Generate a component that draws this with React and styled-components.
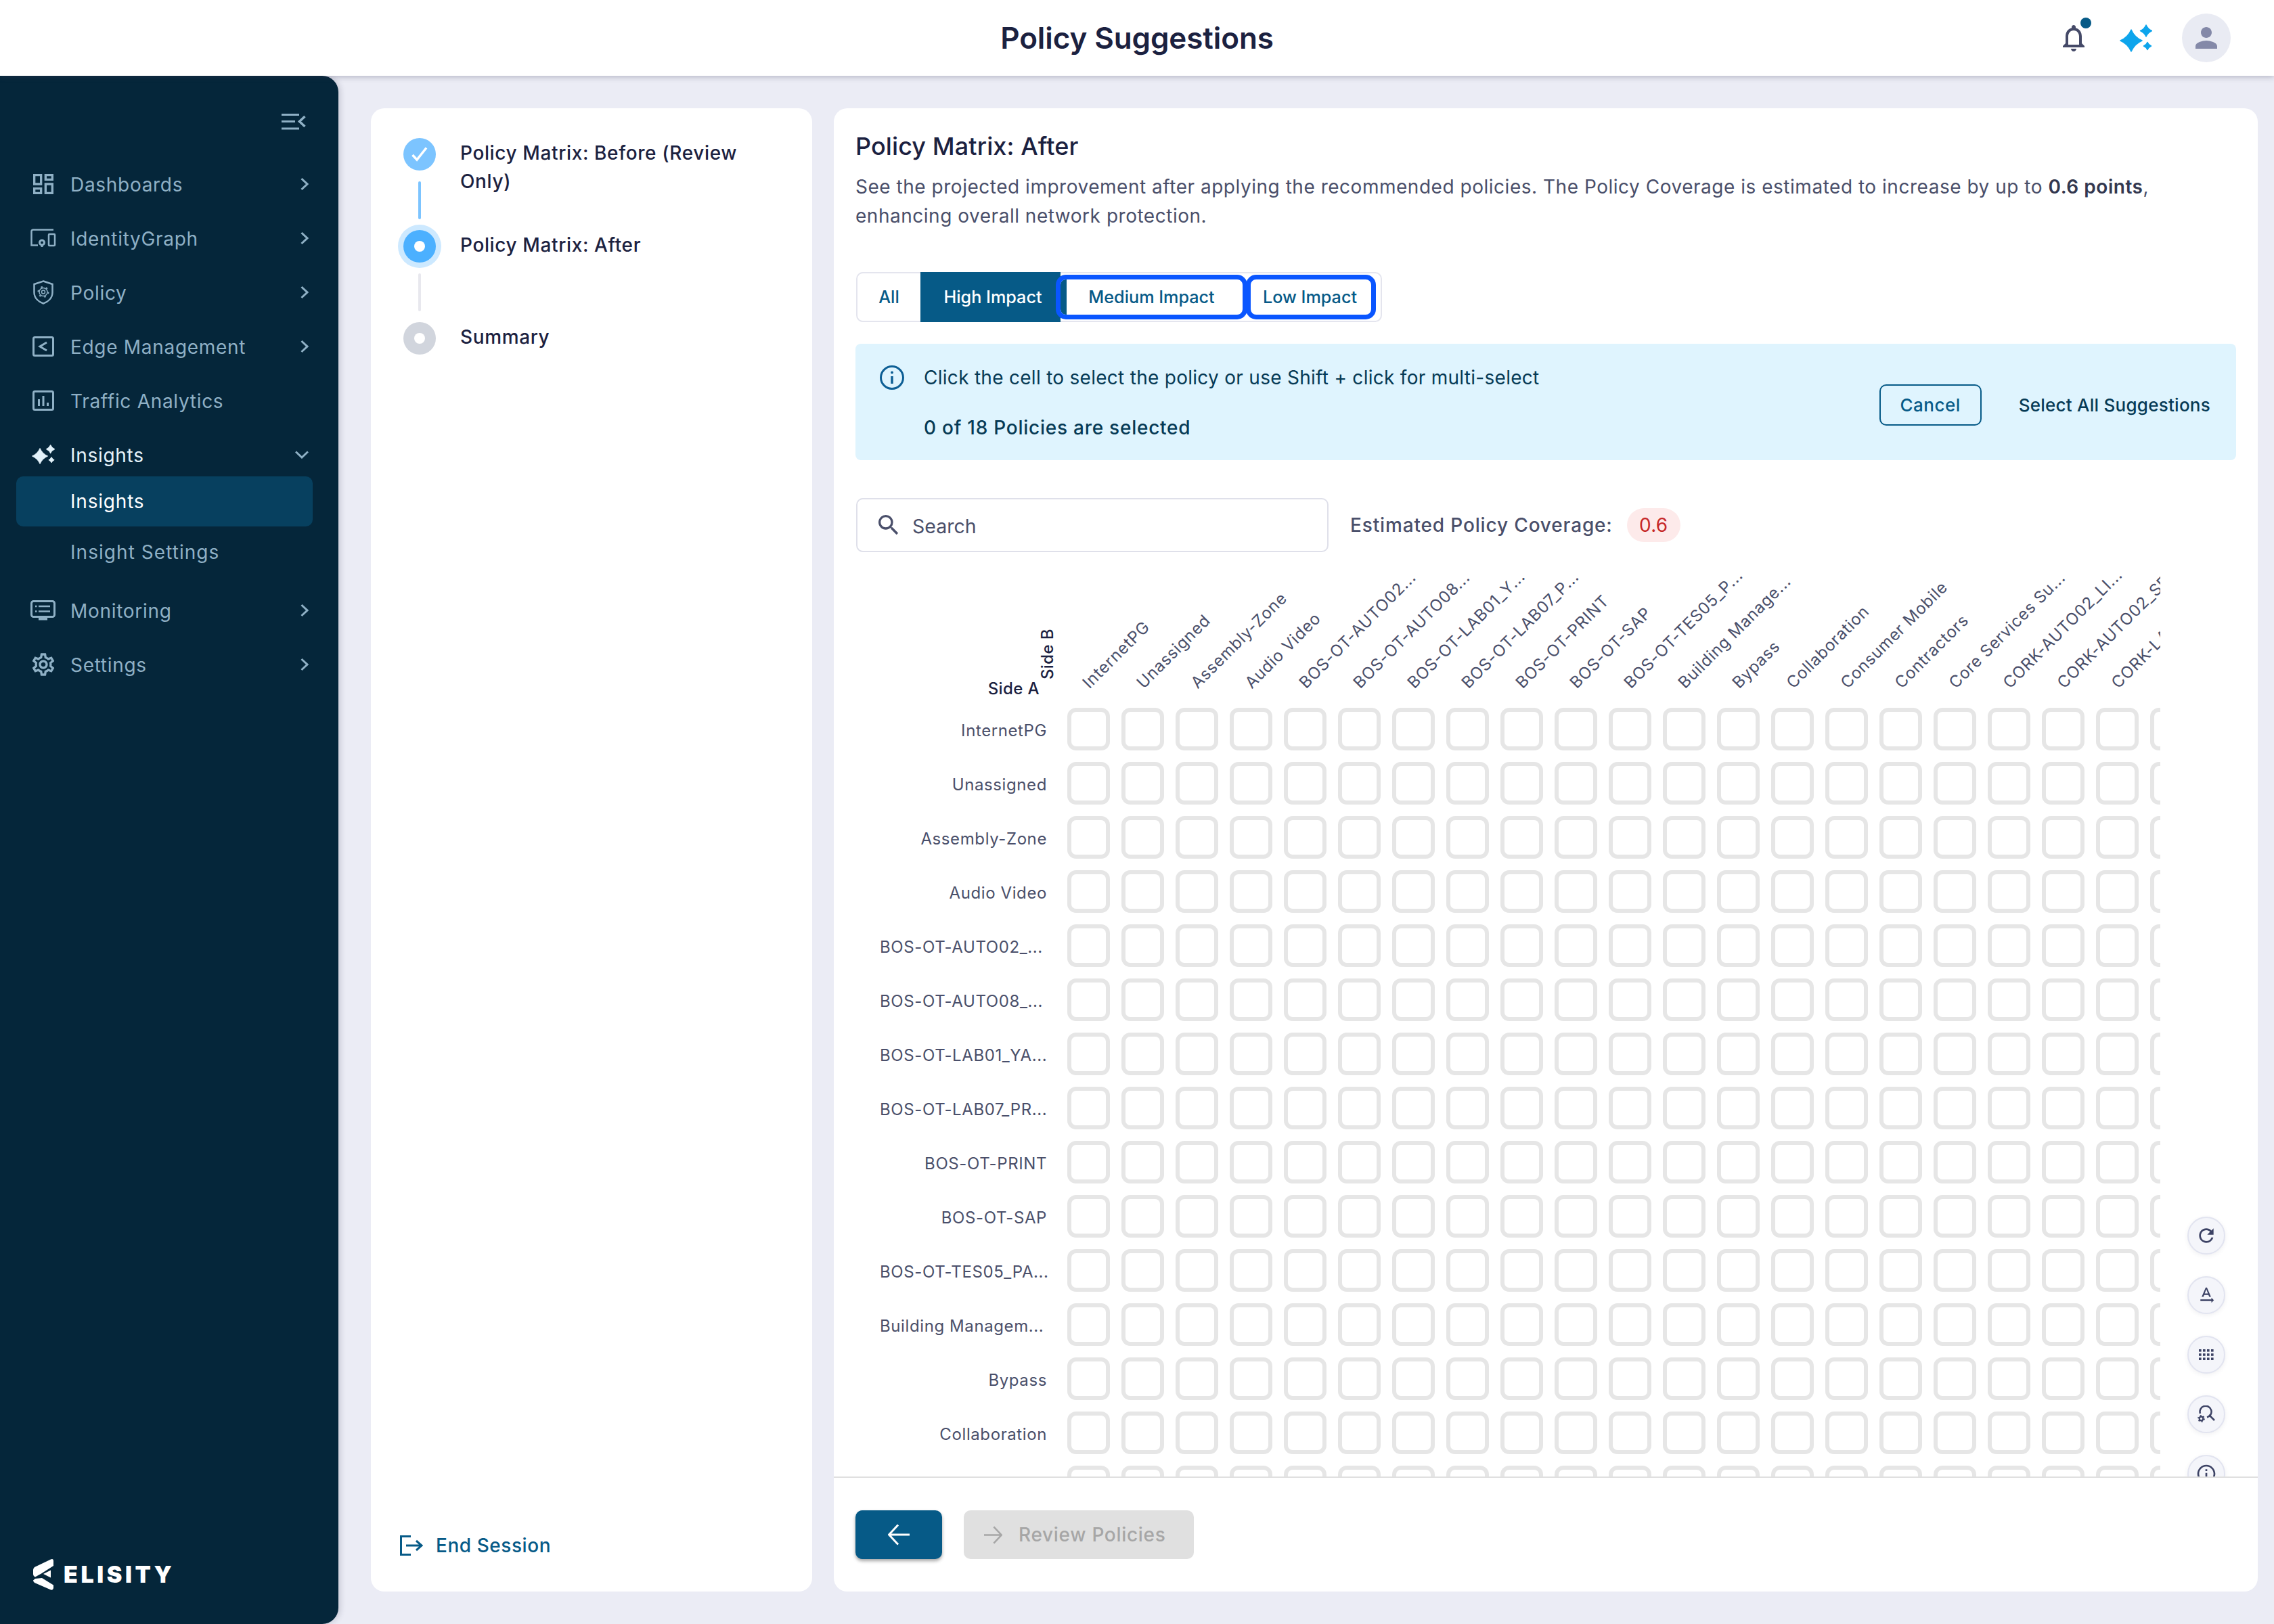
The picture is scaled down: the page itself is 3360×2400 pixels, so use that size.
import React from 'react'
import styled, { createGlobalStyle } from 'styled-components'
import {
    MdOutlineDashboard,
    MdOutlineSettings,
    MdOutlineNotifications,
    MdPerson,
    MdRefresh,
    MdOutlineTextRotationNone,
    MdInfoOutline,
    MdSearch,
} from 'react-icons/md'

const GlobalStyle = createGlobalStyle`
    html, body {
        margin: 0;
        padding: 0;
        background: #ebecf5;
    }
    * {
        box-sizing: border-box;
    }
    body {
        font-family: Inter, "Noto Sans", sans-serif;
        color: #1b2140;
    }
`

const Page = styled.div`
    width: 3360px;
    height: 2400px;
    display: flex;
    flex-direction: column;
    overflow: hidden;
    background: #ebecf5;
`

const TopBar = styled.header`
    height: 112px;
    flex-shrink: 0;
    display: grid;
    grid-template-columns: 1fr auto 1fr;
    align-items: center;
    padding: 0 64px;
    background: #fff;
    box-shadow: 0 2px 8px rgba(60, 60, 90, 0.3);
    position: relative;
    z-index: 2;
`

const PageTitle = styled.h1`
    grid-column: 2;
    margin: 0;
    font-size: 44px;
    font-weight: 600;
    line-height: 56px;
    letter-spacing: -0.1px;
    color: #1b2140;
`

const HeaderActions = styled.div`
    grid-column: 3;
    justify-self: end;
    display: flex;
    align-items: center;
    gap: 44px;
`

const BellWrap = styled.div`
    position: relative;
    width: 48px;
    height: 48px;
    color: #454a68;
`

const BellDot = styled.span`
    position: absolute;
    top: -6px;
    right: -2px;
    width: 16px;
    height: 16px;
    border-radius: 50%;
    background: #065a87;
`

const Avatar = styled.div`
    width: 72px;
    height: 72px;
    border-radius: 50%;
    background: #e9ebf3;
    color: #8489a8;
    display: flex;
    align-items: center;
    justify-content: center;
`

const Body = styled.div`
    flex: 1;
    min-height: 0;
    display: flex;
`

const Sidebar = styled.aside`
    width: 500px;
    flex-shrink: 0;
    display: flex;
    flex-direction: column;
    padding-top: 56px;
    background: #05263a;
    border-radius: 0 24px 24px 0;
    box-shadow: 3px 0 8px rgba(60, 60, 90, 0.2);
`

const CollapseRow = styled.div`
    display: flex;
    justify-content: flex-end;
    padding-right: 48px;
    height: 24px;
    margin-bottom: 56px;
    color: #8fb0c5;
`

const Nav = styled.nav`
    display: flex;
    flex-direction: column;
    gap: 32px;
`

const NavRow = styled.div`
    height: 48px;
    display: flex;
    align-items: center;
    padding: 0 44px 0 41px;
    color: ${(p) => (p.$open ? '#e6f3fa' : '#8fb0c5')};
    font-size: 28px;
    letter-spacing: 0.7px;
`

const NavIcon = styled.span`
    width: 46px;
    margin-right: 17px;
    flex-shrink: 0;
    display: flex;
    align-items: center;
    justify-content: center;
`

const NavLabel = styled.span`
    flex: 1;
    padding-top: 2px;
`

const Caret = styled.span`
    display: flex;
    color: #8fb0c5;
`

const SubList = styled.div`
    display: flex;
    flex-direction: column;
    gap: 7px;
    margin: 8px 38px -1px 24px;
`

const SubItem = styled.div`
    height: ${(p) => (p.$active ? '74px' : '62px')};
    display: flex;
    align-items: center;
    padding-left: 80px;
    border-radius: 10px;
    font-size: 28px;
    letter-spacing: ${(p) => (p.$active ? '0.8px' : '1.05px')};
    color: ${(p) => (p.$active ? '#fff' : '#8fb0c5')};
    background: ${(p) => (p.$active ? '#07405f' : 'transparent')};
`

const Brand = styled.div`
    margin-top: auto;
    padding: 0 0 50px 49px;
    display: flex;
    align-items: center;
    gap: 15px;
    color: #fff;
`

const BrandName = styled.span`
    font-size: 34px;
    font-weight: 900;
    letter-spacing: 4.6px;
    line-height: 46px;
`

const Content = styled.main`
    flex: 1;
    min-width: 0;
    display: flex;
    gap: 32px;
    padding: 48px 24px 48px 48px;
`

const StepPanel = styled.section`
    width: 652px;
    flex-shrink: 0;
    display: flex;
    flex-direction: column;
    padding: 44px 40px 47px;
    background: #fff;
    border-radius: 20px;
`

const Step = styled.div`
    display: flex;
    gap: 28px;
    height: 136px;
`

const StepMarker = styled.div`
    width: 64px;
    flex-shrink: 0;
    display: flex;
    flex-direction: column;
    align-items: center;
`

const StepDot = styled.div`
    width: 48px;
    height: 48px;
    flex-shrink: 0;
    border-radius: 50%;
    display: flex;
    align-items: center;
    justify-content: center;
    background: ${(p) => p.$color};
    box-shadow: ${(p) => (p.$halo ? '0 0 0 8px #cde9ff' : 'none')};
`

const StepCore = styled.span`
    width: 16px;
    height: 16px;
    border-radius: 50%;
    background: #fff;
`

const StepLine = styled.div`
    width: 4px;
    height: 56px;
    margin-top: 16px;
    border-radius: 2px;
    background: ${(p) => (p.$done ? '#7cc4ff' : '#e8e8ee')};
`

const StepText = styled.div`
    padding-top: 1px;
    font-size: 28px;
    font-weight: 450;
    line-height: 42px;
    letter-spacing: 0.62px;
    color: #1b2140;
`

const EndSession = styled.div`
    margin-top: auto;
    padding-left: 3px;
    display: flex;
    align-items: center;
    gap: 19px;
    height: 42px;
    font-size: 28px;
    font-weight: 450;
    letter-spacing: 0.55px;
    color: #065a87;
`

const MainPanel = styled.section`
    flex: 1;
    min-width: 0;
    display: flex;
    flex-direction: column;
    background: #fff;
    border-radius: 20px;
    overflow: hidden;
`

const Intro = styled.div`
    flex-shrink: 0;
    padding: 32px 32px 0;
`

const PanelTitle = styled.h2`
    margin: 0;
    font-size: 36px;
    font-weight: 500;
    line-height: 48px;
    letter-spacing: 0.1px;
    color: #1b2140;
`

const Lead = styled.p`
    margin: 15px 0 61px;
    font-size: 28px;
    line-height: 43px;
    letter-spacing: 0.52px;
    color: #4a4f6a;

    b {
        font-weight: 600;
        color: #33384f;
    }
`

const TabGroup = styled.div`
    display: flex;
    align-items: center;
    width: 777px;
    height: 74px;
    margin-left: 1px;
    border: 2px solid #e4e5ee;
    border-radius: 10px;
`

const Tab = styled.div`
    display: flex;
    align-items: center;
    justify-content: center;
    flex-shrink: 0;
    font-size: 25.2px;
    font-weight: 500;
    color: #065a87;
`

const PlainTab = styled(Tab)`
    width: 93px;
    height: 70px;
`

const ActiveTab = styled(Tab)`
    width: 207px;
    height: 74px;
    padding-left: 7px;
    background: #065a87;
    color: #fff;
`

const FocusTab = styled(Tab)`
    height: 52px;
    width: ${(p) => p.$width}px;
    margin-left: ${(p) => p.$gap}px;
    padding-right: ${(p) => (p.$joined ? '9px' : '3px')};
    background: #fff;
    border-radius: 8px;
    outline: 7px solid #0a56ff;
    position: relative;
    border-left: ${(p) => (p.$joined ? '9px solid #065a87' : '0')};
`

const Banner = styled.div`
    margin: 32px 32px 0;
    flex-shrink: 0;
    height: 172px;
    display: flex;
    padding: 29px 38px 0 36px;
    border-radius: 8px;
    background: #dff4fe;
    color: #063a55;
`

const BannerIcon = styled.span`
    display: flex;
    height: 42px;
    align-items: center;
    margin-right: 29px;
    color: #0e5f95;
`

const BannerText = styled.div`
    flex: 1;
    font-size: 28px;
    line-height: 42px;
    letter-spacing: 0.28px;
`

const BannerCount = styled.div`
    margin-top: 32px;
    font-weight: 500;
    letter-spacing: 0.75px;
`

const BannerActions = styled.div`
    display: flex;
    align-items: center;
    gap: 55px;
    height: 61px;
    margin-top: 31px;
`

const CancelButton = styled.div`
    width: 151px;
    height: 61px;
    display: flex;
    align-items: center;
    justify-content: center;
    border: 2px solid #065a87;
    border-radius: 10px;
    font-size: 26px;
    font-weight: 500;
    letter-spacing: 0.5px;
    color: #065a87;
`

const SelectAll = styled.span`
    font-size: 26px;
    font-weight: 500;
    letter-spacing: 0.25px;
    color: #063a55;
`

const FilterRow = styled.div`
    flex-shrink: 0;
    display: flex;
    align-items: center;
    gap: 32px;
    margin: 56px 32px 0 33px;
`

const SearchBox = styled.div`
    width: 698px;
    height: 80px;
    display: flex;
    align-items: center;
    gap: 15px;
    padding-left: 26px;
    border: 2px solid #dfe0ea;
    border-radius: 10px;
    font-size: 28.5px;
    color: #4a4f6a;
`

const SearchText = styled.span`
    padding-top: 3px;
`

const Coverage = styled.div`
    display: flex;
    align-items: center;
    gap: 21px;
    font-size: 28px;
    font-weight: 450;
    letter-spacing: 0.85px;
    color: #4a4f6a;
`

const CoverageBadge = styled.span`
    width: 79px;
    height: 50px;
    display: flex;
    align-items: center;
    justify-content: center;
    border-radius: 25px;
    background: #fdeaea;
    color: #c62828;
    font-weight: 400;
    letter-spacing: 0.3px;
`

const MatrixArea = styled.div`
    position: relative;
    flex: 1;
    min-height: 0;
    overflow: hidden;
    padding-left: 32px;
`

const MatrixClip = styled.div`
    width: 1928px;
    height: 100%;
    overflow: hidden;
`

const ColumnHeader = styled.div`
    height: 230px;
    display: flex;
    align-items: flex-end;
    padding: 0 0 14px 36px;
`

const Corner = styled.div`
    width: 277px;
    flex-shrink: 0;
    display: flex;
    align-items: flex-end;
    justify-content: flex-end;
    padding-right: 17px;
    font-size: 24px;
    font-weight: 500;
    letter-spacing: 0.4px;
    line-height: 28px;
    color: #1b2140;
`

const SideB = styled.span`
    writing-mode: vertical-rl;
    transform: rotate(180deg);
    margin-bottom: 28px;
    line-height: 24px;
`

const ColumnCell = styled.div`
    width: 80px;
    flex-shrink: 0;
    height: 0;
    display: flex;
    align-items: flex-end;
`

const ColumnLabel = styled.span`
    flex-shrink: 0;
    width: 0;
    margin-left: 37px;
    margin-bottom: 9px;
    white-space: nowrap;
    font-size: 24px;
    line-height: 28px;
    letter-spacing: 0.75px;
    color: #4a4f6a;
    transform-origin: 0 100%;
    transform: rotate(-45deg);
`

const Rows = styled.div`
    display: flex;
    flex-direction: column;
    gap: 17px;
`

const MatrixRow = styled.div`
    display: flex;
    align-items: center;
    gap: 29px;
    padding-left: 36px;
`

const RowLabel = styled.div`
    width: 248px;
    flex-shrink: 0;
    padding: 4px 1px 0 0;
    text-align: ${(p) => (p.$cut ? 'left' : 'right')};
    white-space: nowrap;
    font-size: 24px;
    letter-spacing: 0.6px;
    color: #4a4f6a;
`

const Cells = styled.div`
    display: flex;
    gap: 17px;
`

const Cell = styled.div`
    width: 63px;
    height: 63px;
    flex-shrink: 0;
    border: 6px solid #e6e6e6;
    border-radius: 13px;
    background: #fff;
`

const ToolRail = styled.div`
    position: absolute;
    top: 982px;
    right: 48px;
    display: flex;
    flex-direction: column;
    gap: 32px;
`

const ToolButton = styled.div`
    width: 56px;
    height: 56px;
    display: flex;
    align-items: center;
    justify-content: center;
    border: 2px solid #e2e4f0;
    border-radius: 50%;
    background: #f4f5fa;
    box-shadow: 0 2px 6px rgba(60, 60, 90, 0.08);
    color: #3c4264;
`

const Footer = styled.footer`
    flex-shrink: 0;
    height: 170px;
    display: flex;
    gap: 32px;
    padding: 48px 32px 0;
    border-top: 2px solid #e0e0e0;
`

const BackButton = styled.div`
    width: 128px;
    height: 72px;
    display: flex;
    align-items: center;
    justify-content: center;
    border-radius: 10px;
    background: #065a87;
    box-shadow: 0 3px 5px rgba(0, 0, 0, 0.35);
    color: #fff;
`

const ReviewButton = styled.div`
    width: 340px;
    height: 72px;
    display: flex;
    align-items: center;
    gap: 24px;
    padding-left: 30px;
    border-radius: 10px;
    background: #e0e0e0;
    color: #a6a6a6;
    font-size: 28px;
    font-weight: 500;
    letter-spacing: 0.7px;
`

const star = (cx, cy, r) => {
    const k = r * 0.3
    return `M${cx} ${cy - r}Q${cx + k} ${cy - k} ${cx + r} ${cy}Q${cx + k} ${cy + k} ${cx} ${cy + r}Q${cx - k} ${cy + k} ${cx - r} ${cy}Q${cx - k} ${cy - k} ${cx} ${cy - r}Z`
}

const SparkIcon = ({ width, color }) => (
    <svg width={width} viewBox="0 0 48 41" fill={color} stroke={color} strokeWidth="1.5" strokeLinejoin="round">
        <path d={star(17, 24, 16)} />
        <path d={star(39, 9.5, 8.5)} />
        <path d={star(41, 32, 5.5)} />
    </svg>
)

const CollapseIcon = () => (
    <svg width="36" height="24" viewBox="0 0 36 24" fill="none" stroke="currentColor" strokeWidth="3">
        <path d="M0 1.500H26M0 11.500H20M0 22H26" />
        <path d="M34.500 4L26.500 11.500L34.500 19" strokeWidth="3.500" />
    </svg>
)

const ChevronRight = () => (
    <svg width="12" height="20" viewBox="0 0 12 20" fill="none" stroke="currentColor" strokeWidth="3">
        <path d="M1.500 2L10 10L1.500 18" />
    </svg>
)

const ChevronDown = () => (
    <svg width="20" height="12" viewBox="0 0 20 12" fill="none" stroke="currentColor" strokeWidth="3">
        <path d="M1 1.500L10 10L19 1.500" />
    </svg>
)

const IdentityIcon = () => (
    <svg width="38" height="28" viewBox="0 0 38 28" fill="none" stroke="currentColor" strokeWidth="2.500">
        <path d="M34 1.500H4A2.500 2.500 0 0 0 1.500 4V24.500H11" />
        <circle cx="17" cy="20.500" r="3.500" strokeWidth="3" />
        <path d="M17 24V27" strokeWidth="3" />
        <rect x="27" y="8" width="9" height="17" rx="1" />
    </svg>
)

const PolicyIcon = () => (
    <svg width="30" height="36" viewBox="0 0 30 36" fill="none" stroke="currentColor">
        <path d="M15 1.500L28.500 6V18C28.500 26.500 22 32 15 34.500C8 32 1.500 26.500 1.500 18V6Z" strokeWidth="2.500" />
        <circle cx="15" cy="17.500" r="6" strokeWidth="1.500" />
        <circle cx="15" cy="17.500" r="2.500" strokeWidth="1.500" />
        <circle cx="15" cy="17.500" r="7.500" strokeWidth="2" strokeDasharray="2.500 5.350" />
    </svg>
)

const EdgeIcon = () => (
    <svg width="32" height="30" viewBox="0 0 32 30" fill="none" stroke="currentColor" strokeWidth="3">
        <rect x="1.500" y="1.500" width="29" height="27" rx="2" />
        <path d="M21 9L11 15L21 21" />
    </svg>
)

const TrafficIcon = () => (
    <svg width="32" height="30" viewBox="0 0 32 30" fill="none" stroke="currentColor" strokeWidth="3">
        <rect x="1.500" y="1.500" width="29" height="27" rx="2" />
        <path d="M9.500 13V23M16 8V23M22.500 18V23" />
    </svg>
)

const MonitorIcon = () => (
    <svg width="38" height="30" viewBox="0 0 38 30" fill="none" stroke="currentColor" strokeWidth="3">
        <rect x="1.500" y="1.500" width="34" height="23" rx="3" />
        <path d="M12 9H29M12 16.500H29M7 9H9.500M7 16.500H9.500" strokeWidth="2.500" />
        <path d="M12 27.500H25" strokeWidth="4" />
    </svg>
)

const CheckIcon = () => (
    <svg width="24" height="24" viewBox="0 0 24 24" fill="none" stroke="#fff" strokeWidth="3.500">
        <path d="M1.500 13L8 20L22 2.500" />
    </svg>
)

const EndSessionIcon = () => (
    <svg width="34" height="30" viewBox="0 0 34 30" fill="none" stroke="currentColor" strokeWidth="3">
        <path d="M16 1.500H1.500V28.500H16" />
        <path d="M9 15H31M24 8L32 15L24 22" />
    </svg>
)

const InfoIcon = () => (
    <svg width="36" height="36" viewBox="0 0 36 36" fill="none" stroke="currentColor" strokeWidth="3">
        <circle cx="18" cy="18" r="16.500" />
        <path d="M18 16V27" strokeWidth="3.500" />
        <circle cx="18" cy="10.500" r="2" fill="currentColor" stroke="none" />
    </svg>
)

const ArrowIcon = ({ back, size }) => (
    <svg width={size} height={size} viewBox="0 0 32 32" fill="none" stroke="currentColor" strokeWidth="3">
        <path d={back ? 'M32 16H2M15 1.500L1.500 16L15 30.500' : 'M0 16H30M17 1.500L30.500 16L17 30.500'} />
    </svg>
)

const DotsIcon = () => (
    <svg width="22" height="16" viewBox="0 0 22 16" fill="currentColor">
        {[0, 6.2, 12.4].map((y) =>
            [0, 6, 12, 18].map((x) => <rect key={`${x}-${y}`} x={x} y={y} width="3.600" height="3.600" />)
        )}
    </svg>
)

const SearchGearIcon = () => (
    <svg width="26" height="26" viewBox="0 0 26 26" fill="none" stroke="currentColor" strokeWidth="2.500">
        <path d="M4 12A8.500 8.500 0 1 1 14 17.500" />
        <path d="M17 14L25 22" />
        <circle cx="5.500" cy="19.500" r="2.800" strokeWidth="2.200" />
        <circle cx="5.500" cy="19.500" r="4.500" strokeWidth="1.800" strokeDasharray="2 2.710" />
    </svg>
)

const BrandMark = () => (
    <svg width="30" height="46" viewBox="0 0 30 46" fill="currentColor">
        <path d="M26 0.500Q30 -1 30 3V10L12 21.500L3 26.500Q0 25 0 22V16Q0 14 2 12Z" />
        <path d="M26 16.500V27.500L15 22Z" />
        <path d="M3 29L13 28L30 38.500V43Q29 47 25 45L2 35Q0 33 0 31.500Z" />
    </svg>
)

const navTop = [
    { label: 'Dashboards', icon: <MdOutlineDashboard size={40} /> },
    { label: 'IdentityGraph', icon: <IdentityIcon /> },
    { label: 'Policy', icon: <PolicyIcon /> },
    { label: 'Edge Management', icon: <EdgeIcon /> },
    { label: 'Traffic Analytics', icon: <TrafficIcon />, noCaret: true },
]

const columns = [
    'InternetPG',
    'Unassigned',
    'Assembly-Zone',
    'Audio Video',
    'BOS-OT-AUTO02...',
    'BOS-OT-AUTO08...',
    'BOS-OT-LAB01_Y...',
    'BOS-OT-LAB07_P...',
    'BOS-OT-PRINT',
    'BOS-OT-SAP',
    'BOS-OT-TES05_P...',
    'Building Manage...',
    'Bypass',
    'Collaboration',
    'Consumer Mobile',
    'Contractors',
    'Core Services Su...',
    'CORK-AUTO02_LI...',
    'CORK-AUTO02_SE...',
    'CORK-LAB01_Y...',
]

const rows = [
    'InternetPG',
    'Unassigned',
    'Assembly-Zone',
    'Audio Video',
    'BOS-OT-AUTO02_...',
    'BOS-OT-AUTO08_...',
    'BOS-OT-LAB01_YA...',
    'BOS-OT-LAB07_PR...',
    'BOS-OT-PRINT',
    'BOS-OT-SAP',
    'BOS-OT-TES05_PA...',
    'Building Managem...',
    'Bypass',
    'Collaboration',
    '',
]

const cellKeys = Array.from({ length: 21 }, (_, i) => i)

const NavItem = ({ icon, label, noCaret }) => (
    <NavRow>
        <NavIcon>{icon}</NavIcon>
        <NavLabel>{label}</NavLabel>
        {!noCaret && (
            <Caret>
                <ChevronRight />
            </Caret>
        )}
    </NavRow>
)

const App = () => (
    <Page>
        <GlobalStyle />
        <TopBar>
            <PageTitle>Policy Suggestions</PageTitle>
            <HeaderActions>
                <BellWrap>
                    <MdOutlineNotifications size={48} />
                    <BellDot />
                </BellWrap>
                <SparkIcon width={48} color="#0ea5ec" />
                <Avatar>
                    <MdPerson size={48} />
                </Avatar>
            </HeaderActions>
        </TopBar>
        <Body>
            <Sidebar>
                <CollapseRow>
                    <CollapseIcon />
                </CollapseRow>
                <Nav>
                    {navTop.map((item) => (
                        <NavItem key={item.label} {...item} />
                    ))}
                    <div>
                        <NavRow $open>
                            <NavIcon>
                                <SparkIcon width={34} color="#e3f2fa" />
                            </NavIcon>
                            <NavLabel>Insights</NavLabel>
                            <Caret>
                                <ChevronDown />
                            </Caret>
                        </NavRow>
                        <SubList>
                            <SubItem $active>Insights</SubItem>
                            <SubItem>Insight Settings</SubItem>
                        </SubList>
                    </div>
                    <NavItem icon={<MonitorIcon />} label="Monitoring" />
                    <NavItem icon={<MdOutlineSettings size={40} />} label="Settings" />
                </Nav>
                <Brand>
                    <BrandMark />
                    <BrandName>ELISITY</BrandName>
                </Brand>
            </Sidebar>
            <Content>
                <StepPanel>
                    <Step>
                        <StepMarker>
                            <StepDot $color="#7cc4ff">
                                <CheckIcon />
                            </StepDot>
                            <StepLine $done />
                        </StepMarker>
                        <StepText>Policy Matrix: Before (Review Only)</StepText>
                    </Step>
                    <Step>
                        <StepMarker>
                            <StepDot $color="#4bb0ff" $halo>
                                <StepCore />
                            </StepDot>
                            <StepLine />
                        </StepMarker>
                        <StepText>Policy Matrix: After</StepText>
                    </Step>
                    <Step>
                        <StepMarker>
                            <StepDot $color="#d1d5dd">
                                <StepCore />
                            </StepDot>
                        </StepMarker>
                        <StepText>Summary</StepText>
                    </Step>
                    <EndSession>
                        <EndSessionIcon />
                        End Session
                    </EndSession>
                </StepPanel>
                <MainPanel>
                    <Intro>
                        <PanelTitle>Policy Matrix: After</PanelTitle>
                        <Lead>
                            See the projected improvement after applying the recommended policies. The Policy
                            Coverage is estimated to increase by up to <b>0.6 points</b>, enhancing overall network
                            protection.
                        </Lead>
                        <TabGroup>
                            <PlainTab>All</PlainTab>
                            <ActiveTab>High Impact</ActiveTab>
                            <FocusTab $width={269} $gap={0} $joined>
                                Medium Impact
                            </FocusTab>
                            <FocusTab $width={178} $gap={12}>
                                Low Impact
                            </FocusTab>
                        </TabGroup>
                    </Intro>
                    <Banner>
                        <BannerIcon>
                            <InfoIcon />
                        </BannerIcon>
                        <BannerText>
                            Click the cell to select the policy or use Shift + click for multi-select
                            <BannerCount>0 of 18 Policies are selected</BannerCount>
                        </BannerText>
                        <BannerActions>
                            <CancelButton>Cancel</CancelButton>
                            <SelectAll>Select All Suggestions</SelectAll>
                        </BannerActions>
                    </Banner>
                    <FilterRow>
                        <SearchBox>
                            <MdSearch size={40} />
                            <SearchText>Search</SearchText>
                        </SearchBox>
                        <Coverage>
                            Estimated Policy Coverage:
                            <CoverageBadge>0.6</CoverageBadge>
                        </Coverage>
                    </FilterRow>
                    <MatrixArea>
                        <MatrixClip>
                            <ColumnHeader>
                                <Corner>
                                    <span>Side A</span>
                                    <SideB>Side B</SideB>
                                </Corner>
                                {columns.map((name) => (
                                    <ColumnCell key={name}>
                                        <ColumnLabel>{name}</ColumnLabel>
                                    </ColumnCell>
                                ))}
                            </ColumnHeader>
                            <Rows>
                                {rows.map((name, i) => (
                                    <MatrixRow key={`${name}-${i}`}>
                                        <RowLabel $cut={name.endsWith('...')}>{name}</RowLabel>
                                        <Cells>
                                            {cellKeys.map((k) => (
                                                <Cell key={k} />
                                            ))}
                                        </Cells>
                                    </MatrixRow>
                                ))}
                            </Rows>
                        </MatrixClip>
                        <ToolRail>
                            <ToolButton>
                                <MdRefresh size={32} />
                            </ToolButton>
                            <ToolButton>
                                <MdOutlineTextRotationNone size={30} />
                            </ToolButton>
                            <ToolButton>
                                <DotsIcon />
                            </ToolButton>
                            <ToolButton>
                                <SearchGearIcon />
                            </ToolButton>
                            <ToolButton>
                                <MdInfoOutline size={32} />
                            </ToolButton>
                        </ToolRail>
                    </MatrixArea>
                    <Footer>
                        <BackButton>
                            <ArrowIcon back size={32} />
                        </BackButton>
                        <ReviewButton>
                            <ArrowIcon size={27} />
                            Review Policies
                        </ReviewButton>
                    </Footer>
                </MainPanel>
            </Content>
        </Body>
    </Page>
)

export default App
